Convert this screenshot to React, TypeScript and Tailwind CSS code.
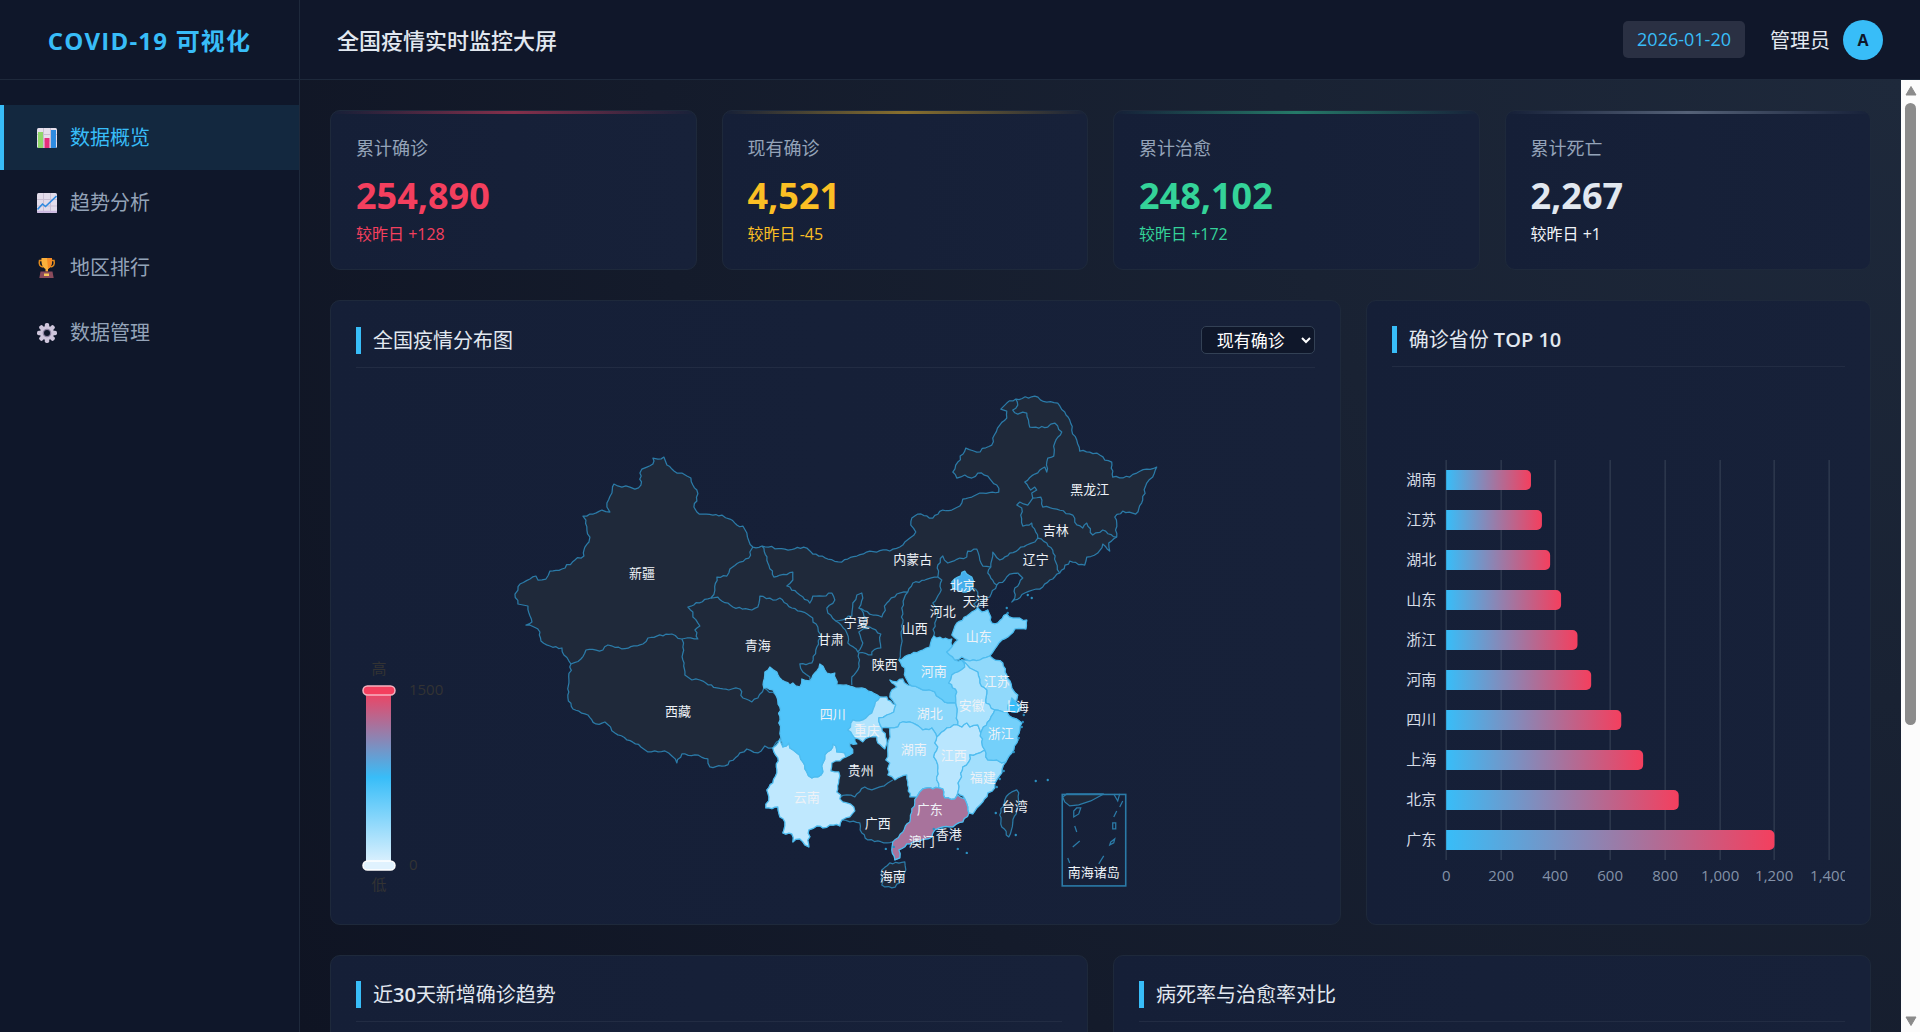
import React from "react";

type Point = [number, number];

interface Region {
  fill: string;
  points: string;
}

const navItems = [
  { label: "数据概览", icon: "bars", active: true },
  { label: "趋势分析", icon: "trend", active: false },
  { label: "地区排行", icon: "trophy", active: false },
  { label: "数据管理", icon: "gear", active: false },
];

const stats = [
  { label: "累计确诊", value: "254,890", diff: "+128", text: "text-[#f43f5e]", sub: "text-[#f43f5e]", line: "via-[#f43f5e]" },
  { label: "现有确诊", value: "4,521", diff: "-45", text: "text-[#fbbf24]", sub: "text-[#fbbf24]", line: "via-[#fbbf24]" },
  { label: "累计治愈", value: "248,102", diff: "+172", text: "text-[#34d399]", sub: "text-[#34d399]", line: "via-[#34d399]" },
  { label: "累计死亡", value: "2,267", diff: "+1", text: "text-[#e2e8f0]", sub: "text-[#f1f5f9]", line: "via-[#94a3b8]" },
];

const ranking = [
  { name: "湖南", value: 310 },
  { name: "江苏", value: 350 },
  { name: "湖北", value: 380 },
  { name: "山东", value: 420 },
  { name: "浙江", value: 480 },
  { name: "河南", value: 530 },
  { name: "四川", value: 640 },
  { name: "上海", value: 720 },
  { name: "北京", value: 850 },
  { name: "广东", value: 1200 },
];

const mainland =
  "753,547 749,541 747,533 743,526 737,525 730,519 722,515 713,515 703,514 697,512 694,507 697,501 697,490 693,485 691,478 687,476 682,473 677,473 672,469 667,465 664,457 658,459 653,458 653,464 647,467 642,469 640,473 641,485 635,489 630,487 622,487 614,484 612,493 607,503 607,507 610,512 602,510 590,514 583,516 586,520 587,530 590,537 589,542 585,547 584,556 575,560 562,569 550,571 546,579 538,580 536,576 530,579 520,584 518,590 515,594 518,604 523,605 528,606 529,613 532,622 526,625 534,627 540,632 541,641 550,646 562,648 564,655 571,664 569,683 568,698 573,709 588,715 596,724 605,722 615,733 627,740 641,747 648,752 665,751 672,756 677,763 682,754 695,755 708,759 710,767 725,766 740,753 747,749 758,753 765,746 773,748 778,758 777,773 773,783 767,790 769,797 766,808 778,807 780,817 785,822 783,833 792,834 793,842 800,839 805,845 809,847 809,830 817,826 823,828 830,825 840,826 842,820 850,822 860,823 862,833 868,840 878,841 887,843 893,842 892,850 895,860 900,858 899,850 907,844 922,840 932,837 935,830 943,827 953,827 963,822 969,813 973,814 977,808 983,802 988,793 995,788 997,780 1002,773 1006,762 1012,753 1017,743 1020,730 1022,723 1013,718 1007,712 1015,703 1018,695 1012,688 1007,675 1003,663 990,656 995,649 1002,640 1008,637 1015,629 1026,629 1027,620 1013,618 1007,614 998,623 992,623 991,617 988,610 982,612 978,608 983,601 990,597 997,585 1005,580 1010,574 1018,573 1023,578 1015,588 1015,598 1012,602 1025,593 1033,590 1043,587 1050,580 1060,573 1070,561 1085,565 1087,557 1098,553 1103,544 1110,551 1109,543 1117,537 1117,523 1115,517 1123,511 1136,514 1143,500 1147,483 1153,477 1157,467 1147,469 1137,473 1130,477 1113,477 1112,462 1105,460 1100,455 1090,452 1080,451 1077,440 1072,430 1070,420 1065,412 1058,403 1047,402 1035,396 1016,399 1007,403 1001,409 1007,411 1007,418 1000,425 993,438 992,445 977,452 966,448 958,462 953,472 957,478 965,475 972,478 978,473 988,476 997,485 999,492 980,493 972,497 963,499 960,506 952,510 943,510 933,518 918,514 912,518 911,525 916,532 905,542 900,547 890,551 870,551 857,556 842,562 828,559 813,554 807,548 785,549 762,546";

const borders = [
  "753,547 750,552 749,558 740,562 730,569 727,576 717,577 715,590 711,598 688,607 693,612 693,617 700,626 695,630 698,639 687,638 682,639 672,634 648,638 643,644 622,649 608,645 603,650 586,650 581,659 571,664",
  "682,639 683,647 683,660 685,675 692,680 700,680 717,688 732,689 740,689 743,698 752,702 758,698 764,688",
  "711,598 718,597 733,607 752,610 758,607 760,596 773,600 780,598 792,608 810,616 818,627 821,635 817,647 812,663 800,664 803,672 810,677 810,681",
  "762,546 768,563 774,577 793,572 793,580 787,586 800,595 810,603 813,596 823,596 832,593 835,600 827,608 828,613 836,621 852,616 853,603 857,595 862,593 863,598 859,608 873,615 882,617 887,603 897,594 908,592 913,583 925,580 938,577",
  "836,621 847,633 848,643 858,652 863,643 859,632 870,627 881,634 881,648 872,652 872,655 859,653 858,670 852,677 852,685",
  "859,608 867,618 863,625 870,627",
  "908,592 902,608 903,623 901,647 899,660",
  "938,577 942,580 940,593 933,603 938,613 935,623 934,636",
  "938,577 938,565 943,556 948,563 960,558 967,557 968,551 977,549 980,560 983,566 991,567 988,573 997,585",
  "991,567 992,560 993,552 1000,560 1010,553 1027,545 1035,542 1038,538 1047,543 1053,550 1056,562 1060,573",
  "1038,538 1036,532 1032,523 1023,526 1021,515 1022,508 1017,505 1020,502 1028,505 1033,498 1041,497 1043,507 1057,509 1073,515 1075,522 1083,528 1087,523 1093,535 1103,530 1117,537",
  "1033,498 1032,493 1037,490 1035,487 1031,490 1025,482 1035,474 1045,467 1047,472 1048,458 1054,456 1055,443 1062,432 1055,423 1048,427 1030,427 1027,413 1023,412 1018,414 1013,410 1018,405 1016,399",
  "840,798 847,795 855,797 865,787 872,790 880,787 888,783 893,780",
  "973,588 978,592 979,599 974,604 978,608",
  "764,688 776,695 780,707 779,723 781,737",
  "781,737 773,748",
];

const regions: Region[] = [
  { fill: "#bfe8fe", points: "780,739 783,747 789,743 790,748 797,753 803,762 807,772 812,778 818,777 823,772 823,763 825,755 831,750 833,744 836,746 837,752 845,753 846,757 840,761 832,763 831,771 839,772 839,780 837,792 841,795 840,799 847,803 854,807 855,811 850,817 842,820 840,826 830,825 823,828 817,826 809,830 809,847 805,845 800,839 793,842 792,834 783,833 785,822 780,817 778,807 766,808 769,797 767,790 773,783 777,773 778,758 773,748" },
  { fill: "#50c4fa", points: "783,747 781,737 779,723 780,707 776,695 773,690 764,688 765,672 770,667 777,672 782,680 790,685 793,683 800,687 802,679 810,681 815,673 820,664 827,673 835,673 837,685 850,686 862,688 872,692 880,697 875,705 872,713 863,720 853,720 848,730 855,738 857,744 850,743 853,753 846,757 845,753 837,752 836,746 833,744 831,750 825,755 823,763 823,772 818,777 812,778 807,772 803,762 797,753 790,748 789,743" },
  { fill: "#b2e4fd", points: "880,697 887,697 888,700 896,705 894,712 887,715 879,718 882,728 887,740 885,749 878,743 877,737 870,737 863,742 855,738 848,730 853,720 863,720 872,713 875,705" },
  { fill: "#8ad7fb", points: "890,680 897,682 903,679 908,685 912,686 923,690 935,692 940,698 948,703 956,703 957,715 958,725 947,728 937,737 932,728 923,730 913,723 900,723 898,727 890,728 882,728 879,718 887,715 894,712 896,705 890,697 892,690 897,687" },
  { fill: "#9bdcfc", points: "890,728 898,727 900,723 913,723 923,730 932,728 937,737 935,743 938,747 934,757 938,765 937,780 939,788 927,788 920,792 917,797 910,797 908,782 907,775 898,778 895,780 888,775 890,763 886,760 888,753 889,740" },
  { fill: "#b9e6fe", points: "937,737 947,728 958,725 962,727 967,723 970,727 978,725 981,733 982,742 985,750 980,753 970,755 969,762 963,767 960,780 958,793 955,799 945,798 943,789 939,788 937,780 938,765 934,757 938,747 935,743" },
  { fill: "#a2dffd", points: "985,750 988,760 997,760 1002,763 1006,762 1002,773 997,780 995,788 988,793 983,802 977,808 973,814 969,813 968,807 965,799 958,793 960,780 963,767 969,762 970,755 980,753" },
  { fill: "#a8739c", points: "927,788 939,788 943,789 945,798 955,799 958,795 965,799 968,807 969,813 963,822 953,827 943,827 935,830 932,837 922,840 907,844 899,850 900,858 895,860 892,850 893,842 903,832 910,822 912,812 915,803 917,797 920,792" },
  { fill: "#68cdfa", points: "934,636 943,639 952,639 952,647 947,652 955,660 962,660 965,667 958,672 952,675 949,683 957,692 956,703 948,703 940,698 935,692 923,690 912,686 906,678 905,668 899,660 908,655 920,651 930,647" },
  { fill: "#80d4fb", points: "978,608 982,612 988,610 991,617 992,623 998,623 1007,614 1013,618 1027,620 1026,629 1015,629 1008,637 1002,640 995,649 990,656 980,660 970,661 962,657 955,660 947,652 952,647 958,640 952,635 957,623 967,616" },
  { fill: "#90d9fb", points: "990,656 1003,663 1007,675 1012,688 1018,695 1015,703 1007,712 995,710 986,703 987,690 980,683 978,672 970,668 962,660 970,661 980,660" },
  { fill: "#aae2fd", points: "962,660 970,668 978,672 980,683 987,690 986,703 995,710 990,720 981,733 978,725 970,727 967,723 962,727 958,725 957,715 956,703 957,692 949,683 952,675 958,672 965,667" },
  { fill: "#74d0fa", points: "995,710 1007,712 1013,718 1022,723 1020,730 1017,743 1012,753 1006,762 1002,763 997,760 988,760 985,750 982,742 981,733 990,720" },
  { fill: "#38bdf8", points: "1012,698 1016,702 1021,706 1020,711 1012,712 1008,709" },
  { fill: "#45aeec", points: "965,571 972,577 973,588 970,591 963,592 953,589 952,582 958,577" },
  { fill: "#1f293a", points: "882,870 890,863 905,862 906,870 900,883 892,888 882,885" },
  { fill: "#1f293a", points: "1017,790 1019,793 1018,807 1013,823 1009,837 1002,827 1000,815 1005,800 1012,792" },
];

const mapLabels: [string, number, number][] = [
  ["新疆", 642, 573],
  ["西藏", 678, 711],
  ["青海", 758, 645],
  ["甘肃", 831, 639],
  ["宁夏", 857, 622],
  ["内蒙古", 913, 559],
  ["黑龙江", 1090, 489],
  ["吉林", 1056, 530],
  ["辽宁", 1036, 559],
  ["北京", 963, 585],
  ["天津", 976, 601],
  ["河北", 943, 611],
  ["山西", 915, 628],
  ["陕西", 885, 664],
  ["山东", 979, 636],
  ["河南", 934, 671],
  ["江苏", 997, 681],
  ["安徽", 972, 705],
  ["上海", 1016, 706],
  ["湖北", 930, 713],
  ["浙江", 1001, 733],
  ["四川", 833, 714],
  ["重庆", 867, 730],
  ["湖南", 914, 749],
  ["江西", 954, 755],
  ["福建", 983, 777],
  ["贵州", 861, 770],
  ["云南", 807, 797],
  ["广西", 878, 823],
  ["广东", 930, 809],
  ["澳门", 922, 841],
  ["香港", 949, 834],
  ["海南", 893, 876],
  ["台湾", 1015, 806],
  ["南海诸岛", 1094, 872],
];

const noise = (n: number) => {
  const s = Math.sin(n) * 43758.5453;
  return s - Math.floor(s) - 0.5;
};

// roughens one edge; the result is the same from either end, so neighbours still share it
const roughEdge = (a: Point, b: Point): Point[] => {
  const flip = a[0] > b[0] || (a[0] === b[0] && a[1] > b[1]);
  const [p, q] = flip ? [b, a] : [a, b];
  const dx = q[0] - p[0];
  const dy = q[1] - p[1];
  const len = Math.hypot(dx, dy);
  const steps = Math.floor(len / 3);
  const out: Point[] = [];
  for (let i = 1; i < steps; i++) {
    const t = i / steps;
    const off = noise(p[0] * 12.9 + p[1] * 78.2 + q[0] * 3.7 + i * 5.1) * 2.4;
    out.push([p[0] + dx * t - (dy / len) * off, p[1] + dy * t + (dx / len) * off]);
  }
  return flip ? out.reverse() : out;
};

const toPath = (points: string, closed: boolean) => {
  const pts = points.split(" ").map((s) => s.split(",").map(Number) as Point);
  const all: Point[] = [];
  pts.forEach((pt, i) => {
    all.push(pt);
    const next = i < pts.length - 1 ? pts[i + 1] : closed ? pts[0] : null;
    if (next) all.push(...roughEdge(pt, next));
  });
  return "M" + all.map(([x, y]) => `${x.toFixed(1)} ${y.toFixed(1)}`).join("L") + (closed ? "Z" : "");
};

const NavIcon: React.FC<{ name: string }> = ({ name }) => {
  if (name === "bars") {
    return (
      <svg width="20" height="20" viewBox="0 0 20 20" aria-hidden="true">
        <rect width="20" height="20" rx="1.5" fill="#e6e0ec" />
        <path d="M0 6.5h20M0 13h20M6.5 0v20M13.5 0v20" stroke="#c9bfd3" />
        <rect x="1" y="4" width="5" height="16" fill="#8fd86a" />
        <rect x="7.5" y="10" width="5" height="10" fill="#e5307c" />
        <rect x="14" y="2" width="5" height="18" fill="#2f8be0" />
      </svg>
    );
  }
  if (name === "trend") {
    return (
      <svg width="20" height="20" viewBox="0 0 20 20" aria-hidden="true">
        <rect width="20" height="20" rx="1.5" fill="#e2dcea" />
        <path d="M0 6.5h20M0 13h20M6.5 0v20M13.5 0v20" stroke="#c9bfd3" />
        <path d="M0 18.8h20" stroke="#cbb8e0" strokeWidth="2" />
        <path d="M0.500 16.500 5.500 11l3 2.500L19.500 3" fill="none" stroke="#2f8be0" strokeWidth="1.6" />
      </svg>
    );
  }
  if (name === "trophy") {
    return (
      <svg width="20" height="20" viewBox="0 0 20 20" aria-hidden="true">
        <path d="M5 2.5H2.5c-1 4 .5 6 3.5 6.5M14 2.5h3c1 4-.5 6-3.5 6.5" fill="none" stroke="#e08a1e" strokeWidth="1.5" />
        <path d="M4.5 0h10.5c.4 6-1 9.500-4 11v2.500H8.500V11c-3-1.500-4.400-5-4-11Z" fill="#fbb03b" />
        <path d="M10 0h5c.4 6-1 9.500-4 11Z" fill="#f58a24" />
        <path d="M3.500 13.500h12l1.200 6.500H2.300Z" fill="#8a4b5c" />
        <rect x="7" y="15.500" width="5" height="2.500" fill="#f8c65a" />
      </svg>
    );
  }
  return (
    <svg width="20" height="20" viewBox="0 0 20 20" aria-hidden="true">
      <g fill="#cfc6dc">
        {[0, 45, 90, 135].map((deg) => (
          <rect key={deg} x="7.800" y="0" width="4.400" height="20" rx="1.800" transform={`rotate(${deg} 10 10)`} />
        ))}
        <circle cx="10" cy="10" r="7" />
      </g>
      <circle cx="10" cy="10" r="4.300" fill="#8d82a0" />
      <circle cx="10" cy="10" r="3" fill="#0f172a" />
    </svg>
  );
};

const ChinaMap: React.FC = () => (
  <svg viewBox="356 368 959 531" className="block h-[531px] w-full" role="img" aria-label="全国疫情分布图">
    <defs>
      <linearGradient id="scale" x1="0" y1="0" x2="0" y2="1">
        <stop offset="0" stopColor="#f43f5e" />
        <stop offset="0.5" stopColor="#38bdf8" />
        <stop offset="1" stopColor="#e0f2fe" />
      </linearGradient>
    </defs>

    <g stroke="#2b7ba8" strokeWidth="1.25" strokeLinejoin="round" fill="none">
      <path d={toPath(mainland, true)} fill="#1f293a" />
      {borders.map((line) => (
        <path key={line} d={toPath(line, false)} />
      ))}
      {regions.map((region) => (
        <path
          key={region.points}
          d={toPath(region.points, true)}
          fill={region.fill}
          stroke={region.fill === "#1f293a" ? "#2b7ba8" : "#4fbdf0"}
        />
      ))}
    </g>

    {/* islands */}
    <g fill="#2b8fc0">
      {[
        [1036, 781], [1048, 780], [996, 813], [1016, 835], [958, 849], [967, 853], [886, 849], [894, 847],
        [1028, 595], [1032, 598], [1007, 608], [1008, 613], [1024, 715], [1023, 722], [1022, 727], [1019, 738],
        [1014, 752], [1004, 771], [1000, 779], [997, 787], [934, 829], [942, 829],
      ].map(([x, y]) => (
        <circle key={`${x}-${y}`} cx={x} cy={y} r="1.2" />
      ))}
    </g>

    {/* south china sea inset */}
    <g stroke="#2b7ba8" strokeWidth="1.25" fill="none">
      <path d="M1063 797l4-3h37l-13 7-12 4-9 1-5-4Z" fill="#1f293a" />
      <rect x="1062.500" y="794.500" width="63.500" height="91.500" strokeWidth="1.600" />
      <path d="M1114 794l4 7 2-7M1074 811l3-3 4 0-2 6-5 3ZM1075 826l2 6M1080 841l-7 6M1068 858l2 5M1123 801l-3 6M1117 811l-3 6M1113 823h3v6h-3ZM1111 842l4-3-1 4-4 2ZM1104 856l-5 8" />
    </g>

    <g fill="#eef2f7" fontSize="13" textAnchor="middle" dominantBaseline="central">
      {mapLabels.map(([name, x, y]) => (
        <text key={name} x={x} y={y}>
          {name}
        </text>
      ))}
    </g>

    {/* colour scale */}
    <rect x="366" y="690" width="25" height="175" fill="url(#scale)" />
    <rect x="363" y="686" width="32" height="9" rx="4.500" fill="#f43f5e" stroke="#f6b3c1" strokeWidth="1.500" />
    <rect x="363" y="861" width="32" height="9" rx="4.500" fill="#e0f2fe" stroke="#fff" strokeWidth="1.500" />
    <g fill="#333" fontSize="15" dominantBaseline="central">
      <text x="379" y="668" textAnchor="middle">高</text>
      <text x="379" y="884" textAnchor="middle">低</text>
      <text x="409" y="689">1500</text>
      <text x="409" y="864">0</text>
    </g>
  </svg>
);

const RankingChart: React.FC = () => {
  const left = 54;
  const top = 93;
  const unit = 383 / 1400;
  const ticks = [0, 200, 400, 600, 800, 1000, 1200, 1400];
  return (
    <svg viewBox="0 0 453 531" className="block h-[531px] w-full" role="img" aria-label="确诊省份 TOP 10">
      <defs>
        <linearGradient id="bar">
          <stop offset="0" stopColor="#38bdf8" />
          <stop offset="1" stopColor="#f43f5e" />
        </linearGradient>
      </defs>
      {ticks.map((tick) => {
        const x = Math.round(left + tick * unit);
        return (
          <g key={tick}>
            <path d={`M${x} ${top}v400`} stroke="#2e394e" strokeWidth="1.500" />
            <text x={x} y={508} fill="#8492a8" fontSize="15" textAnchor="middle" dominantBaseline="central">
              {tick.toLocaleString("en-US")}
            </text>
          </g>
        );
      })}
      {ranking.map((item, i) => {
        const y = top + 10 + i * 40;
        const end = left + item.value * unit;
        return (
          <g key={item.name}>
            <text x={left - 10} y={y + 9} fill="#d5dbe5" fontSize="15" textAnchor="end" dominantBaseline="central">
              {item.name}
            </text>
            <path
              d={`M${left} ${y}H${end - 5}a5 5 0 0 1 5 5v10a5 5 0 0 1 -5 5H${left}Z`}
              fill="url(#bar)"
            />
          </g>
        );
      })}
    </svg>
  );
};

interface PanelProps {
  title: React.ReactNode;
  action?: React.ReactNode;
  className?: string;
  children?: React.ReactNode;
}

const Panel: React.FC<PanelProps> = ({ title, action, className, children }) => (
  <section
    className={`min-w-0 rounded-[10px] border border-[#1e293b] bg-linear-to-r from-[#151f37] to-[#172139] p-[25px] ${className ?? ""}`}
  >
    <div className="flex items-center justify-between border-b border-[#222c43] pb-[13px]">
      <h3 className="border-l-[5px] border-[#38bdf8] pt-px pl-3 text-[20px] leading-[26px] text-[#e2e8f0]">{title}</h3>
      {action}
    </div>
    {children}
  </section>
);

const Scrollbar: React.FC = () => (
  <div className="flex w-[19px] shrink-0 flex-col items-center justify-between bg-[#fcfcfc] py-[5px]" aria-hidden="true">
    <svg width="12" height="12" viewBox="0 0 12 12">
      <path d="M6 1.500 11 10H1Z" fill="#8b8b8b" stroke="#8b8b8b" strokeLinejoin="round" />
    </svg>
    <div className="mt-[6px] mb-auto h-[66%] w-[11px] rounded-full bg-[#8b8b8b]" />
    <svg width="12" height="12" viewBox="0 0 12 12">
      <path d="M6 10.500 11 2H1Z" fill="#8b8b8b" stroke="#8b8b8b" strokeLinejoin="round" />
    </svg>
  </div>
);

const App: React.FC = () => {
  return (
    <div className="flex h-screen overflow-hidden bg-[#0f172a] font-['Open_Sans','Noto_Sans_CJK_SC',sans-serif] text-[#e2e8f0]">
      <aside className="flex w-[300px] shrink-0 flex-col border-r border-[#1e293b] bg-[#0f172a]">
        <div className="flex h-20 items-center justify-center border-b border-[#1e293b] pt-[2px] text-[24px] font-bold tracking-wider text-[#38bdf8]">
          COVID-19 可视化
        </div>
        <nav className="pt-[25px]">
          {navItems.map((item) => (
            <a
              key={item.label}
              href="#"
              className={`flex h-[65px] items-center gap-[13px] border-l-4 pl-[33px] text-[20px] ${
                item.active
                  ? "border-[#38bdf8] bg-[#13283f] text-[#38bdf8]"
                  : "border-transparent text-[#94a3b8] hover:text-white"
              }`}
            >
              <NavIcon name={item.icon} />
              {item.label}
            </a>
          ))}
        </nav>
      </aside>

      <div className="flex min-w-0 flex-1 flex-col">
        <header className="flex h-20 shrink-0 items-center justify-between border-b border-[#1e293b] bg-[#10172a] px-[37px]">
          <h2 className="pt-[2px] text-[22px] font-medium">全国疫情实时监控大屏</h2>
          <div className="flex items-center gap-[25px]">
            <div className="rounded-[5px] bg-[#2a3043] px-[14px] py-[6px] text-[18px] leading-[25px] text-[#38bdf8]">
              2026-01-20
            </div>
            <div className="flex items-center gap-[13px]">
              <span className="pt-[2px] text-[20px]">管理员</span>
              <div className="flex h-10 w-10 items-center justify-center rounded-full bg-[#38bdf8] text-[16px] font-bold text-[#0f172a]">
                A
              </div>
            </div>
          </div>
        </header>

        <div className="flex min-h-0 flex-1">
          <main className="min-w-0 flex-1 overflow-hidden bg-[radial-gradient(circle_at_top_right,#1e293b,#0f1423)] p-[30px]">
            <div className="mb-[30px] grid grid-cols-4 gap-[25px]">
              {stats.map((stat) => (
                <div
                  key={stat.label}
                  className="relative h-40 overflow-hidden rounded-[10px] border border-[#1e293b] bg-linear-to-r from-[#151f37] to-[#172139] px-[25px] pt-6"
                >
                  <div
                    className={`absolute inset-x-0 top-0 h-[3px] bg-linear-to-r from-transparent to-transparent opacity-50 ${stat.line}`}
                  />
                  <div className="text-[18px] leading-[27px] text-[#94a3b8]">{stat.label}</div>
                  <div className={`mt-[10px] text-[36px] leading-[48px] font-bold ${stat.text}`}>{stat.value}</div>
                  <div className={`mt-[3px] text-[16px] leading-[22px] ${stat.sub}`}>较昨日 {stat.diff}</div>
                </div>
              ))}
            </div>

            <div className="mb-[30px] grid grid-cols-[2fr_1fr] gap-[25px]">
              <Panel
                title="全国疫情分布图"
                action={
                  <select
                    aria-label="地图指标"
                    className="h-7 w-[114px] rounded-[5px] border border-[#334155] bg-[#0f172a] pl-[11px] text-[17px] leading-[20px] text-white"
                  >
                    <option>现有确诊</option>
                    <option>累计确诊</option>
                  </select>
                }
              >
                <ChinaMap />
              </Panel>
              <Panel
                title={
                  <>
                    确诊省份 <span className="font-semibold">TOP 10</span>
                  </>
                }
              >
                <RankingChart />
              </Panel>
            </div>

            <div className="grid grid-cols-2 gap-[25px]">
              <Panel
                className="h-[450px]"
                title={
                  <>
                    近<span className="font-semibold">30</span>天新增确诊趋势
                  </>
                }
              />
              <Panel className="h-[450px]" title="病死率与治愈率对比" />
            </div>
          </main>
          <Scrollbar />
        </div>
      </div>
    </div>
  );
};

export default App;
